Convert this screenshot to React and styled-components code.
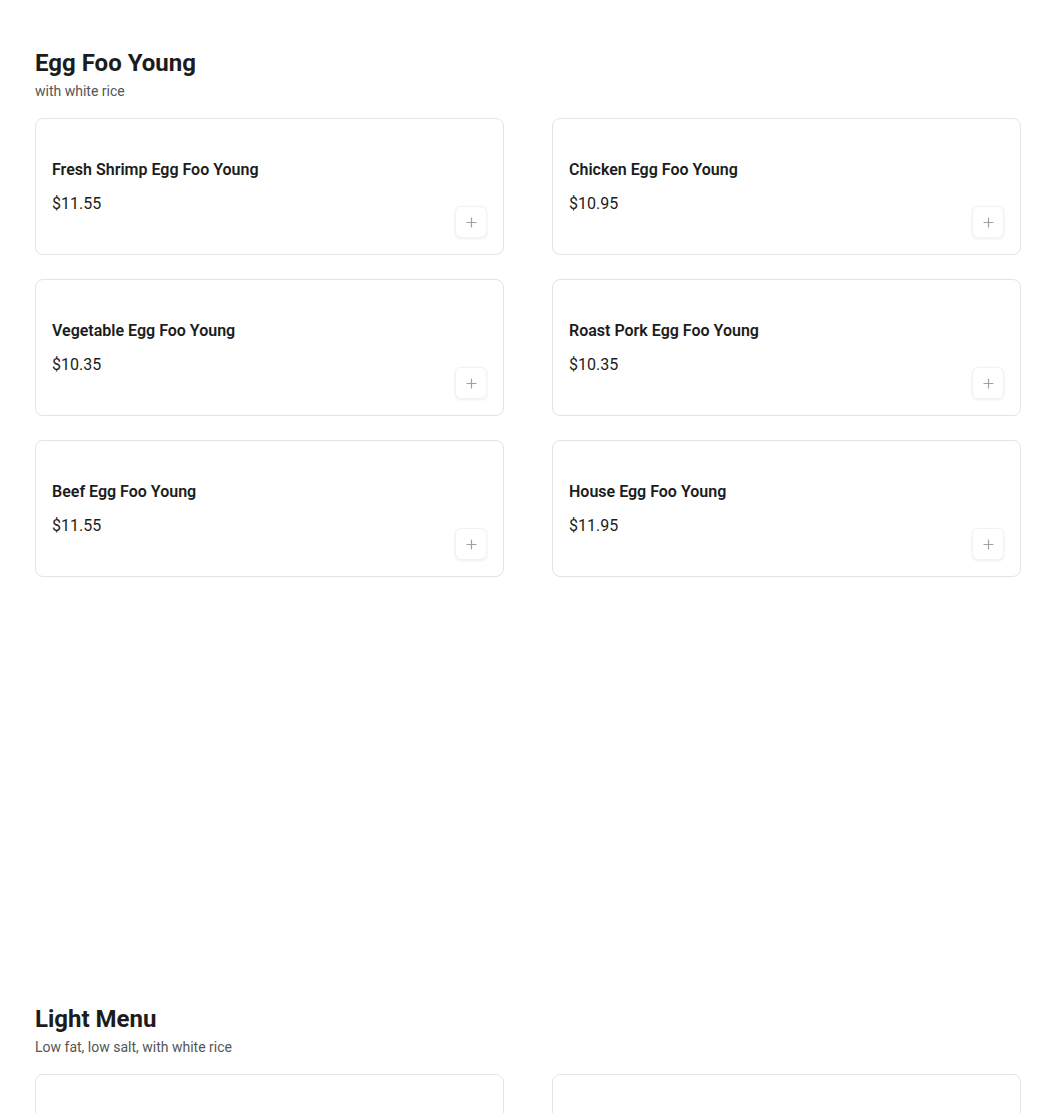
import React from "react";
import styled, { createGlobalStyle } from "styled-components";

const Global = createGlobalStyle`
  html, body { margin: 0; padding: 0; background: #fff; }
  body { font-family: Roboto, "Noto Sans", "Liberation Sans", sans-serif; color: #1a1a1a; }
  * { box-sizing: border-box; }
`;

const Page = styled.main`
  padding: 47px 29px 0 35px;
  width: 1050px;
`;

const Section = styled.section`
  margin-bottom: ${(p) => p.$after || 0}px;
`;

const Title = styled.h2`
  margin: 0;
  font-size: 24px;
  line-height: 32px;
  font-weight: 700;
  color: #1c1c1c;
`;

const Subtitle = styled.p`
  margin: 2px 0 0;
  font-size: 14px;
  line-height: 20px;
  color: #555;
`;

const Grid = styled.div`
  margin-top: 17px;
  display: grid;
  grid-template-columns: 469px 469px;
  column-gap: 48px;
  row-gap: 24px;
`;

const Card = styled.div`
  height: 137px;
  border: 1px solid #e4e4e4;
  border-radius: 8px;
  background: #fff;
  padding: 39px 16px 16px;
  display: flex;
  align-items: flex-end;
  justify-content: space-between;
`;

const Info = styled.div`
  align-self: flex-start;
  display: flex;
  flex-direction: column;
  gap: 10px;
`;

const ItemName = styled.div`
  font-size: 16px;
  line-height: 24px;
  font-weight: 600;
  color: #1c1c1c;
`;

const Price = styled.div`
  font-size: 16px;
  line-height: 24px;
  color: #1c1c1c;
`;

const AddButton = styled.button`
  width: 32px;
  height: 32px;
  padding: 0;
  border: 1px solid #f2f2f2;
  border-radius: 6px;
  background: #fff;
  box-shadow: 0 1px 3px rgba(0, 0, 0, 0.07);
  display: flex;
  align-items: center;
  justify-content: center;
  cursor: pointer;
`;

const Plus = () => (
  <svg width="11" height="11" viewBox="0 0 11 11" fill="none">
    <path d="M5.5 1v9M1 5.5h9" stroke="#a0a0a0" strokeWidth="1.2" strokeLinecap="round" />
  </svg>
);

const sections = [
  {
    title: "Egg Foo Young",
    subtitle: "with white rice",
    after: 426,
    items: [
      ["Fresh Shrimp Egg Foo Young", "$11.55"],
      ["Chicken Egg Foo Young", "$10.95"],
      ["Vegetable Egg Foo Young", "$10.35"],
      ["Roast Pork Egg Foo Young", "$10.35"],
      ["Beef Egg Foo Young", "$11.55"],
      ["House Egg Foo Young", "$11.95"],
    ],
  },
  {
    title: "Light Menu",
    subtitle: "Low fat, low salt, with white rice",
    after: 0,
    items: [
      ["Steamed Mixed Vegetables", "$10.35"],
      ["Steamed Chicken with Broccoli", "$11.55"],
    ],
  },
];

export default function App() {
  return (
    <>
      <Global />
      <Page>
        {sections.map((s) => (
          <Section key={s.title} $after={s.after}>
            <Title>{s.title}</Title>
            <Subtitle>{s.subtitle}</Subtitle>
            <Grid>
              {s.items.map(([name, price]) => (
                <Card key={name}>
                  <Info>
                    <ItemName>{name}</ItemName>
                    <Price>{price}</Price>
                  </Info>
                  <AddButton aria-label={`Add ${name}`}>
                    <Plus />
                  </AddButton>
                </Card>
              ))}
            </Grid>
          </Section>
        ))}
      </Page>
    </>
  );
}
